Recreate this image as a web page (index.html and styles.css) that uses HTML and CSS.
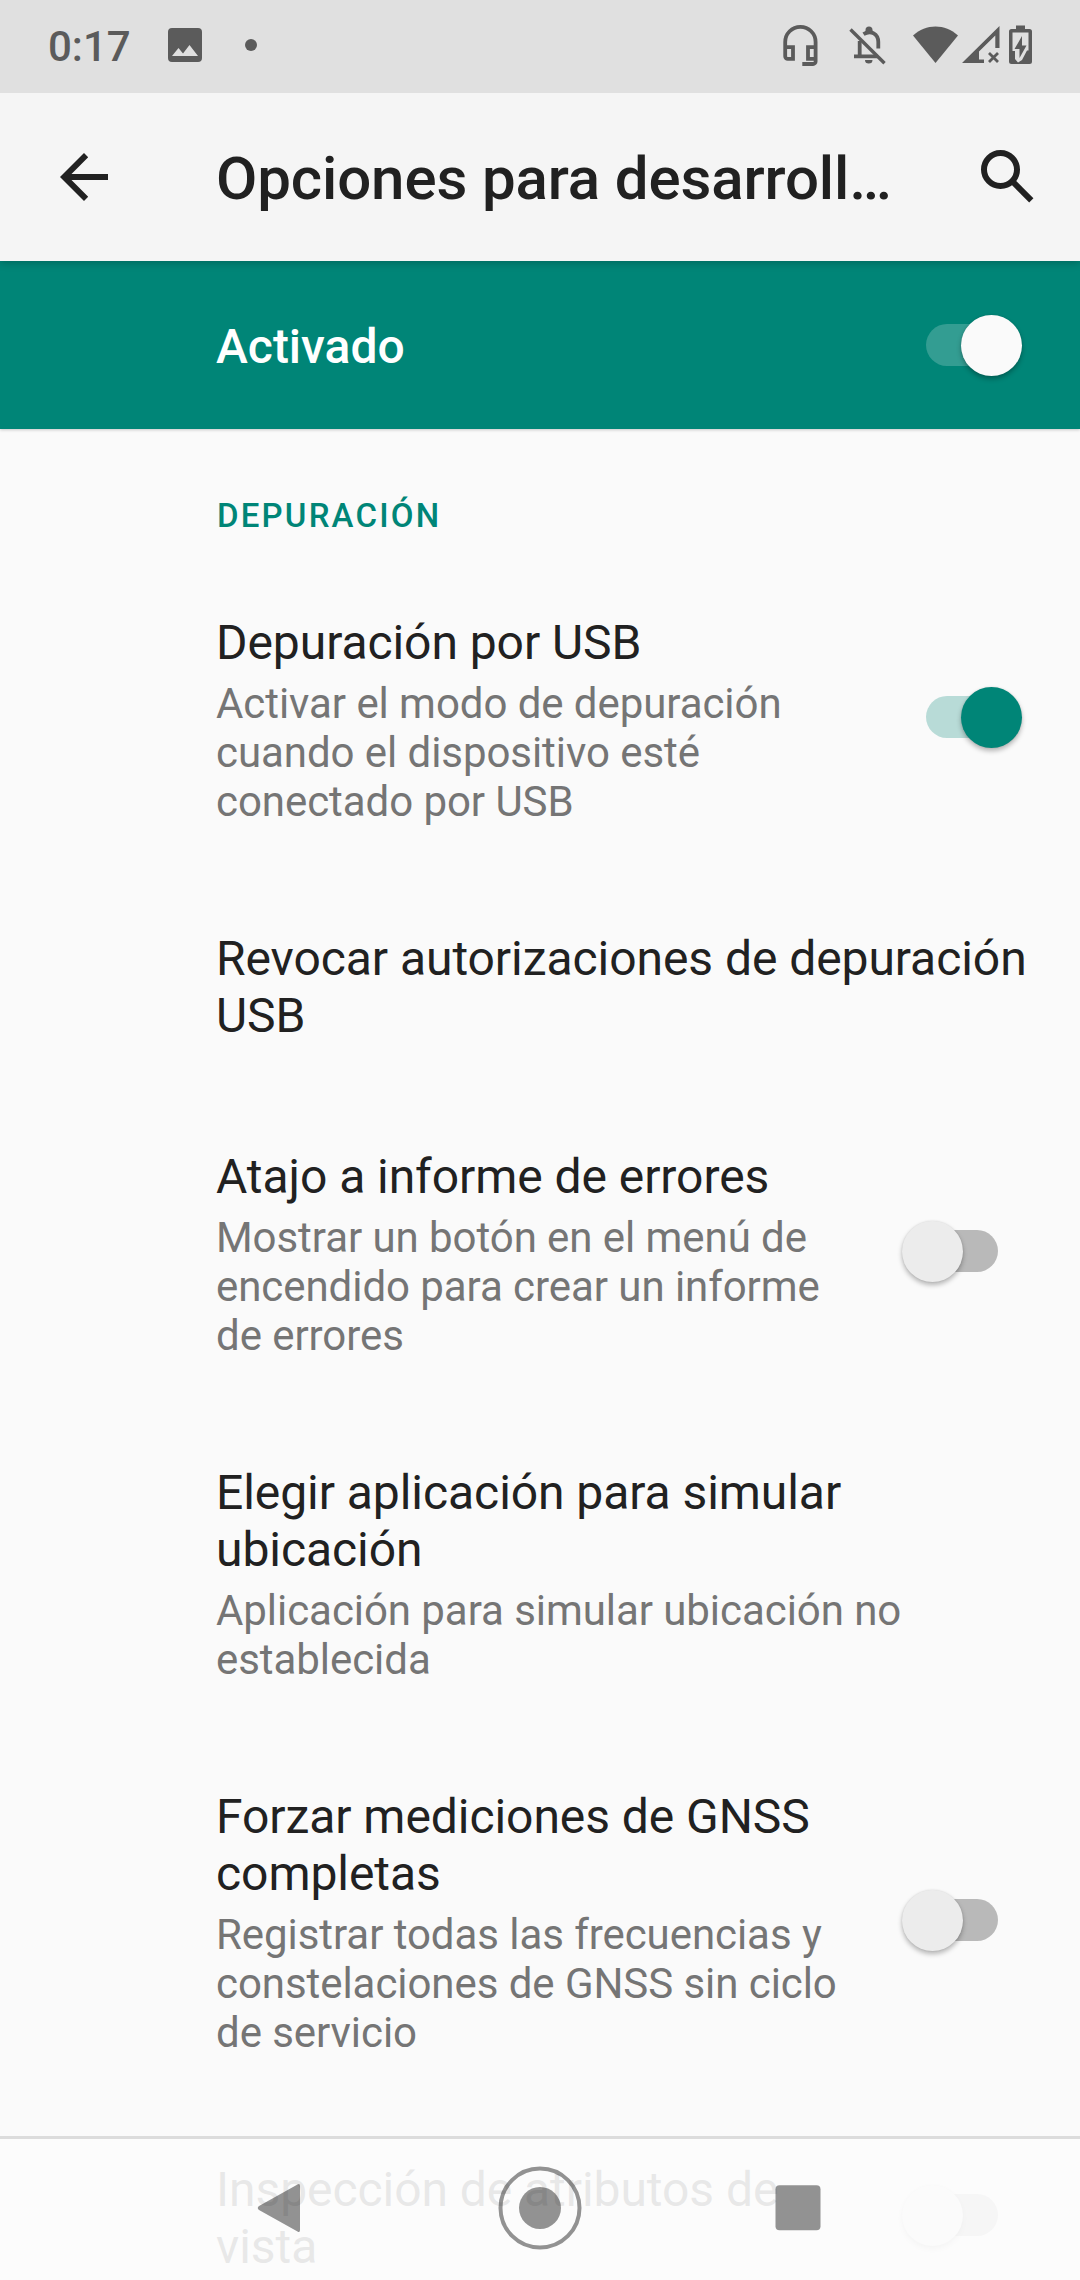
FILE: index.html
```html
<!DOCTYPE html>
<html lang="es">
<head>
<meta charset="utf-8">
<title>Opciones para desarrolladores</title>
<link rel="stylesheet" href="styles.css">
</head>
<body>
<div class="screen">
  <header class="status">
    <span class="clock">0:17</span>
    <svg class="ic-picture" width="36" height="36" viewBox="0 0 36 36"><path fill="#5b5b5b" fill-rule="evenodd" d="M5 1H31Q35 1 35 5V31Q35 35 31 35H5Q1 35 1 31V5Q1 1 5 1ZM5 29H31L22.500 18L16 26.500L11.500 21Z"/></svg>
    <span class="dot"></span>
    <svg class="status-icons" width="320" height="93" viewBox="0 0 320 93" fill="#5b5b5b">
      <g fill="none" stroke="#5b5b5b" stroke-width="3.800">
        <path d="M25.200 55V42a15.200 15.200 0 0 1 30.400 0V61.500a2.500 2.500 0 0 1-2.500 2.500H42.300M25.200 47.200H33V58.800H27.700a2.500 2.500 0 0 1-2.500-2.500ZM55.600 47.200H48V58.800H55.600"/>
        <path d="M94 56.300H117.500M99.700 56V41M103.500 34.200C111 29.500 118.300 34 118.300 42V48.500"/>
        <path d="M90.500 29.500L124.500 63.200" stroke-width="3.400"/>
      </g>
      <path d="M105.500 34V30a3.500 3.500 0 0 1 7 0V34ZM105 60H112.500a3.750 3.500 0 0 1-7.500 0Z"/>
      <path d="M153 35.500C166 23.500 185 23.500 198 35.500L175.500 63Z"/>
      <path fill-rule="evenodd" d="M202 63L239.500 26V48H235.300V35.500L219 51.500V59.500H224V63Z"/>
      <path d="M229 53L238 62M238 53L229 62" stroke="#5b5b5b" stroke-width="2.800"/>
      <path fill-rule="evenodd" d="M256 25.500H265V29H269.500Q272 29 272 31.500V61.500Q272 64 269.500 64H251.500Q249 64 249 61.500V31.500Q249 29 251.500 29H256ZM252.500 32.500V51H255V59L258 62.500L262 60L267 50.500H268.500V32.500Z"/>
      <path d="M262 36L254.500 49H259.500V58L266.500 45.500H262Z"/>
    </svg>
  </header>

  <div class="appbar">
    <svg class="ic-back" width="48" height="48" viewBox="0 0 48 48"><path fill="#212121" d="M48 21H11.500L28.200 4.200L24 0L0 24L24 48L28.200 43.800L11.500 27H48Z"/></svg>
    <h1>Opciones para desarroll…</h1>
    <svg class="ic-search" width="54" height="54" viewBox="0 0 54 54"><circle cx="19.500" cy="19.500" r="16.500" fill="none" stroke="#212121" stroke-width="6"/><path d="M31 31L50.300 50.300" stroke="#212121" stroke-width="6"/></svg>
  </div>

  <div class="master">
    <span>Activado</span>
    <div class="switch on light"><i></i></div>
  </div>

  <main>
    <h2>DEPURACIÓN</h2>
    <section class="row">
      <div class="text"><h3>Depuración por USB</h3><p>Activar el modo de depuración cuando el dispositivo esté conectado por USB</p></div>
      <div class="switch on"><i></i></div>
    </section>
    <section class="row">
      <div class="text wide"><h3>Revocar autorizaciones de depuración USB</h3></div>
    </section>
    <section class="row">
      <div class="text"><h3>Atajo a informe de errores</h3><p>Mostrar un botón en el menú de encendido para crear un informe de errores</p></div>
      <div class="switch"><i></i></div>
    </section>
    <section class="row">
      <div class="text wide"><h3>Elegir aplicación para simular ubicación</h3><p>Aplicación para simular ubicación no establecida</p></div>
    </section>
    <section class="row">
      <div class="text"><h3>Forzar mediciones de GNSS completas</h3><p>Registrar todas las frecuencias y constelaciones de GNSS sin ciclo de servicio</p></div>
      <div class="switch"><i></i></div>
    </section>
    <section class="row">
      <div class="text"><h3>Inspección de atributos de vista</h3></div>
      <div class="switch"><i></i></div>
    </section>
  </main>

  <nav class="navbar">
    <svg width="84" height="84" viewBox="0 0 84 84"><path d="M61 20V64Q61 67 58.500 65.500L20 44Q17.500 42 20 40L58.500 18.500Q61 17 61 20Z"/></svg>
    <svg width="84" height="84" viewBox="0 0 84 84"><circle cx="42" cy="42" r="21"/><circle class="ring" cx="42" cy="42" r="39.500"/></svg>
    <svg width="84" height="84" viewBox="0 0 84 84"><rect x="19.500" y="19.300" width="45" height="45" rx="4"/></svg>
  </nav>
</div>
</body>
</html>
```
FILE: styles.css
```css
* { box-sizing: border-box; margin: 0; padding: 0; }

body {
  width: 1080px;
  height: 2280px;
  overflow: hidden;
  background: #fafafa;
  font-family: Roboto, "Liberation Sans", sans-serif;
  color: #212121;
}

svg { display: block; flex: none; }

.screen {
  position: relative;
  width: 1080px;
  height: 2280px;
  overflow: hidden;
}

/* Status bar */
.status {
  position: relative;
  z-index: 2;
  display: flex;
  align-items: center;
  height: 93px;
  background: #e0e0e0;
}
.clock {
  width: 119px;
  margin-left: 48px;
  font-size: 42px;
  font-weight: 500;
  line-height: 50px;
  color: #5b5b5b;
}
.ic-picture { margin-bottom: 3px; }
.dot {
  width: 12px;
  height: 12px;
  margin: 0 auto 3px 42px;
  border-radius: 50%;
  background: #5b5b5b;
}

/* App bar */
.appbar {
  position: relative;
  z-index: 1;
  display: flex;
  align-items: center;
  height: 168px;
  padding: 0 45px 0 60px;
  background: #f5f5f5;
  box-shadow: 0 2px 8px rgba(0, 0, 0, .22);
}
.appbar h1 {
  margin: 4px auto 0 108px;
  font-size: 60px;
  font-weight: 500;
  line-height: 70px;
  letter-spacing: -.12px;
  white-space: nowrap;
}

/* Main toggle */
.master {
  display: flex;
  align-items: center;
  justify-content: space-between;
  height: 168px;
  padding: 0 58px 0 216px;
  background: #008577;
  box-shadow: 0 1px 3px rgba(0, 0, 0, .2);
  font-size: 48px;
  font-weight: 500;
  line-height: 57px;
  color: #fff;
}
.master span { margin-top: 3px; }

/* Switch */
.switch {
  position: relative;
  flex: none;
  width: 120px;
  height: 62px;
}
.switch::before {
  content: "";
  position: absolute;
  left: 24px;
  top: 10px;
  width: 72px;
  height: 42px;
  border-radius: 21px;
  background: #b9b9b9;
}
.switch i {
  position: absolute;
  left: 0;
  top: 1px;
  width: 61px;
  height: 61px;
  border-radius: 50%;
  background: #ececec;
  box-shadow: 0 3px 5px rgba(0, 0, 0, .28), 0 0 2px rgba(0, 0, 0, .1);
}
.switch.on::before { background: #b8dbd7; }
.switch.on i { left: 59px; background: #008577; }
.switch.light::before { background: #339d92; }
.switch.light i { background: #fafafa; }

/* Preference list */
h2 {
  height: 130px;
  padding: 67px 0 0 217px;
  font-size: 33px;
  font-weight: 500;
  line-height: 39px;
  letter-spacing: 2.2px;
  color: #008577;
}
.row {
  display: flex;
  align-items: center;
  justify-content: space-between;
  padding: 0 58px 0 216px;
}
.text {
  width: 638px;
  flex: none;
  padding: 55px 0 49px;
  letter-spacing: -.06px;
}
.text.wide { width: 816px; }
h3 { font-size: 48px; font-weight: 400; line-height: 57px; }
.text p { margin-top: 8px; font-size: 42px; line-height: 49px; color: #757575; }

/* Navigation bar, floating over the list */
.navbar {
  position: absolute;
  left: 0;
  right: 0;
  bottom: 0;
  display: flex;
  align-items: center;
  justify-content: space-between;
  height: 144px;
  padding: 0 240px 3px 239px;
  border-top: 3px solid #dcdcdc;
  background: rgba(252, 252, 252, .91);
}
.navbar svg { fill: rgba(0, 0, 0, .42); }
.navbar .ring { fill: none; stroke: rgba(0, 0, 0, .42); stroke-width: 4px; }
```
